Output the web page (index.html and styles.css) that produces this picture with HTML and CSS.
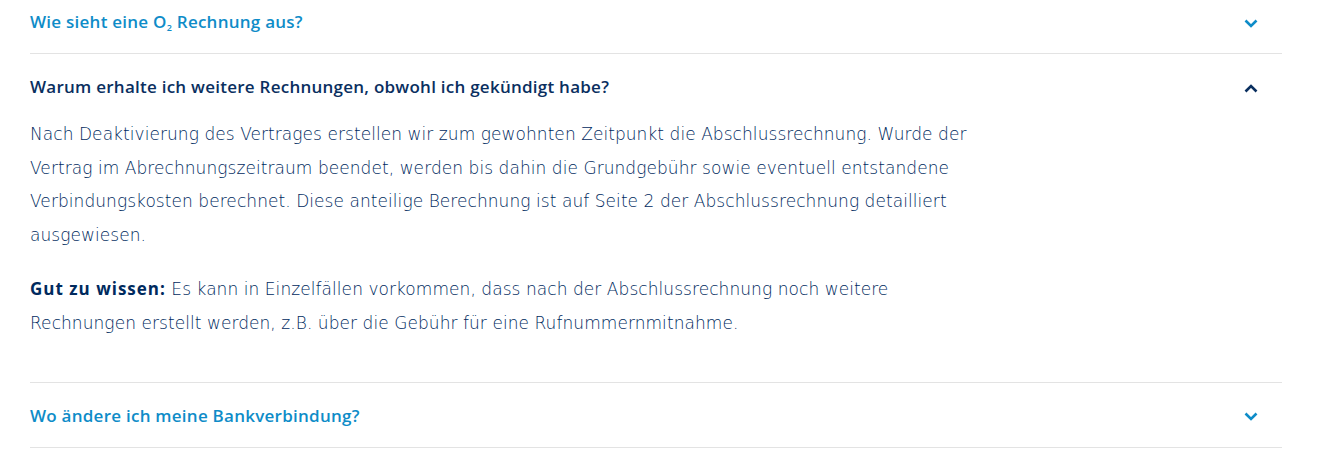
FILE: index.html
```html
<!DOCTYPE html>
<html lang="de">
<head>
<meta charset="utf-8">
<title>FAQ</title>
<link rel="stylesheet" href="styles.css">
</head>
<body>
<div class="faq">
  <div class="item">
    <div class="head">
      <span class="q">Wie sieht eine O<sub class="sub">2</sub> Rechnung aus?</span>
      <svg class="chev" width="14" height="9" viewBox="0 0 14 9"><path d="M1.5 1.5 L7 7 L12.5 1.5" fill="none" stroke="currentColor" stroke-width="2.6"/></svg>
    </div>
  </div>
  <div class="item open">
    <div class="head">
      <span class="q">Warum erhalte ich weitere Rechnungen, obwohl ich gekündigt habe?</span>
      <svg class="chev" width="14" height="9" viewBox="0 0 14 9"><path d="M1.5 7.5 L7 2 L12.5 7.5" fill="none" stroke="currentColor" stroke-width="2.6"/></svg>
    </div>
    <div class="body">
      <p>Nach Deaktivierung des Vertrages erstellen wir zum gewohnten Zeitpunkt die Abschlussrechnung. Wurde der Vertrag im Abrechnungszeitraum beendet, werden bis dahin die Grundgebühr sowie eventuell entstandene Verbindungskosten berechnet. Diese anteilige Berechnung ist auf Seite 2 der Abschlussrechnung detailliert ausgewiesen.</p>
      <p><strong>Gut zu wissen:</strong> Es kann in Einzelfällen vorkommen, dass nach der Abschlussrechnung noch weitere Rechnungen erstellt werden, z.B. über die Gebühr für eine Rufnummernmitnahme.</p>
    </div>
  </div>
  <div class="item">
    <div class="head">
      <span class="q">Wo ändere ich meine Bankverbindung?</span>
      <svg class="chev" width="14" height="9" viewBox="0 0 14 9"><path d="M1.5 1.5 L7 7 L12.5 1.5" fill="none" stroke="currentColor" stroke-width="2.6"/></svg>
    </div>
  </div>
</div>
</body>
</html>
```

FILE: styles.css
```css
html, body {
  margin: 0;
  padding: 0;
  background: #ffffff;
}
body {
  font-family: "Open Sans", "Noto Sans", sans-serif;
}
.faq {
  margin: -11px 44px 0 30px;
}
.item {
  border-bottom: 1px solid #e3e3e3;
}
.head {
  display: flex;
  align-items: center;
  justify-content: space-between;
  padding: 23px 0 21px;
  color: #0e8cc8;
}
.item.open .head {
  color: #0a2f5f;
}
.q {
  font-size: 17px;
  line-height: 20px;
  font-weight: 600;
  letter-spacing: 0.25px;
}
.sub {
  font-size: 9px;
  vertical-align: -3px;
  line-height: 0;
}
.chev {
  margin-right: 24px;
  margin-top: 2px;
  display: block;
}
.body {
  color: #002a5e;
  font-family: "DejaVu Sans", sans-serif;
  font-size: 17px;
  font-weight: 200;
  line-height: 33.6px;
  letter-spacing: 0.06px;
  max-width: 950px;
  padding-bottom: 41px;
}
.body p {
  margin: 0;
}
.body p + p {
  margin-top: 20px;
}
.body strong {
  font-family: "Open Sans", sans-serif;
  font-weight: 700;
  letter-spacing: 1px;
}
```
